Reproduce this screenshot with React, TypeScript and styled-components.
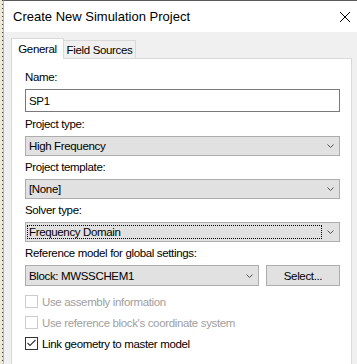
import React from 'react';
import styled, { createGlobalStyle, css } from 'styled-components';

const GlobalStyle = createGlobalStyle`
  html, body {
    margin: 0;
    padding: 0;
    background: #ece9d8;
  }
  body {
    font-family: "Liberation Sans", Arial, sans-serif;
    font-size: 11.5px;
    letter-spacing: -0.35px;
    color: #000;
  }
`;

const Desktop = styled.div`
  display: flex;
  width: 357px;
  height: 364px;
  overflow: hidden;
`;

// dotted strip of whatever sits behind the dialog on the left
const Edge = styled.div`
  width: 3px;
  flex: none;
  background-color: #ece9d8;
  background-image: repeating-linear-gradient(
    to bottom,
    #3a3a3a 0px,
    #3a3a3a 1px,
    transparent 1px,
    transparent 4px
  );
  background-size: 1px 100%;
  background-repeat: no-repeat;
  background-position: 2px 0;
`;

const Window = styled.div`
  flex: 1;
  display: flex;
  flex-direction: column;
  border-left: 1px solid #b4b4b4;
  border-top: 1px solid #5a5a5a;
  background: #f0f0f0;
`;

const TitleBar = styled.div`
  height: 31px;
  flex: none;
  display: flex;
  align-items: center;
  justify-content: space-between;
  background: #fff;
  padding: 0 6px 0 9px;
`;

const Title = styled.span`
  font-size: 13px;
  letter-spacing: 0;
  color: #000;
`;

const Body = styled.div`
  flex: 1;
  padding: 6px 5px 0 7px;
  display: flex;
  flex-direction: column;
`;

const Tabs = styled.div`
  display: flex;
  align-items: flex-end;
  height: 20px;
  position: relative;
  z-index: 1;
`;

const Tab = styled.div<{ $active?: boolean; $width: number }>`
  display: flex;
  align-items: center;
  justify-content: center;
  box-sizing: border-box;
  width: ${(p) => p.$width}px;
  border: 1px solid #d9d9d9;
  border-bottom: none;
  ${(p) =>
    p.$active
      ? css`
          height: 21px;
          margin-bottom: -1px;
          padding-bottom: 1px;
          background: #fff;
        `
      : css`
          height: 18px;
          padding-top: 1px;
          background: #f0f0f0;
          border-left: none;
        `}
`;

const Panel = styled.div`
  flex: 1;
  background: #fff;
  border: 1px solid #d9d9d9;
  border-bottom: none;
  padding: 11px 11px 0 13px;
  display: flex;
  flex-direction: column;
`;

const Field = styled.div<{ $after?: number }>`
  display: flex;
  flex-direction: column;
  gap: 4px;
  margin-bottom: ${(p) => p.$after ?? 4}px;
`;

const Label = styled.label`
  line-height: 15px;
  height: 15px;
  white-space: nowrap;
`;

const TextBox = styled.div`
  box-sizing: border-box;
  height: 23px;
  border: 1px solid #7a7a7a;
  padding: 0 3px;
  display: flex;
  align-items: center;
  background: #fff;
`;

const Combo = styled.div`
  box-sizing: border-box;
  height: 21px;
  flex: 1;
  border: 1px solid #adadad;
  background: #e1e1e1;
  display: flex;
  align-items: center;
  padding-left: 1px;
`;

const ComboText = styled.span<{ $focused?: boolean }>`
  flex: 1;
  align-self: stretch;
  margin: 2px 0;
  padding-left: 1px;
  display: flex;
  align-items: center;
  white-space: nowrap;
  border: 1px dotted ${(p) => (p.$focused ? '#000' : 'transparent')};
`;

const Arrow = styled.span`
  width: 17px;
  display: flex;
  justify-content: center;
  color: #505050;
`;

const Row = styled.div`
  display: flex;
  gap: 7px;
`;

const Button = styled.div`
  box-sizing: border-box;
  width: 74px;
  height: 21px;
  border: 1px solid #adadad;
  background: #e1e1e1;
  display: flex;
  align-items: center;
  justify-content: center;
`;

const Checks = styled.div`
  display: flex;
  flex-direction: column;
  gap: 8px;
  margin-top: 9px;
`;

const CheckRow = styled.div<{ $disabled?: boolean }>`
  display: flex;
  align-items: center;
  gap: 4px;
  height: 13px;
  white-space: nowrap;
  color: ${(p) => (p.$disabled ? '#a0a0a0' : '#000')};
`;

const Box = styled.span<{ $disabled?: boolean }>`
  box-sizing: border-box;
  width: 13px;
  height: 13px;
  flex: none;
  border: 1px solid ${(p) => (p.$disabled ? '#cccccc' : '#333333')};
  background: #fff;
  display: flex;
  align-items: center;
  justify-content: center;
`;

const Chevron = () => (
  <svg width="7" height="4" viewBox="0 0 7 4">
    <path d="M0.5 0.5 L3.5 3.5 L6.5 0.5" fill="none" stroke="currentColor" strokeWidth="1" />
  </svg>
);

const CloseIcon = () => (
  <svg width="12" height="12" viewBox="0 0 12 12">
    <path d="M1 1 L11 11 M11 1 L1 11" stroke="#000" strokeWidth="1" />
  </svg>
);

const Tick = () => (
  <svg width="11" height="11" viewBox="0 0 11 11">
    <path d="M1.5 5 L4 7.5 L9.5 2" fill="none" stroke="#333" strokeWidth="1.1" />
  </svg>
);

const Select = ({ value, focused }: { value: string; focused?: boolean }) => (
  <Combo>
    <ComboText $focused={focused}>{value}</ComboText>
    <Arrow>
      <Chevron />
    </Arrow>
  </Combo>
);

const Check = ({ label, checked, disabled }: { label: string; checked?: boolean; disabled?: boolean }) => (
  <CheckRow $disabled={disabled}>
    <Box $disabled={disabled}>{checked && <Tick />}</Box>
    {label}
  </CheckRow>
);

const App = () => {
  return (
    <>
      <GlobalStyle />
      <Desktop>
        <Edge />
        <Window>
          <TitleBar>
            <Title>Create New Simulation Project</Title>
            <CloseIcon />
          </TitleBar>
          <Body>
            <Tabs>
              <Tab $active $width={53}>General</Tab>
              <Tab $width={72}>Field Sources</Tab>
            </Tabs>
            <Panel>
              <Field $after={5}>
                <Label>Name:</Label>
                <TextBox>SP1</TextBox>
              </Field>
              <Field>
                <Label>Project type:</Label>
                <Select value="High Frequency" />
              </Field>
              <Field>
                <Label>Project template:</Label>
                <Select value="[None]" />
              </Field>
              <Field>
                <Label>Solver type:</Label>
                <Select value="Frequency Domain" focused />
              </Field>
              <Field $after={0}>
                <Label>Reference model for global settings:</Label>
                <Row>
                  <Select value="Block: MWSSCHEM1" />
                  <Button>Select...</Button>
                </Row>
              </Field>
              <Checks>
                <Check label="Use assembly information" disabled />
                <Check label="Use reference block's coordinate system" disabled />
                <Check label="Link geometry to master model" checked />
              </Checks>
            </Panel>
          </Body>
        </Window>
      </Desktop>
    </>
  );
};

export default App;
